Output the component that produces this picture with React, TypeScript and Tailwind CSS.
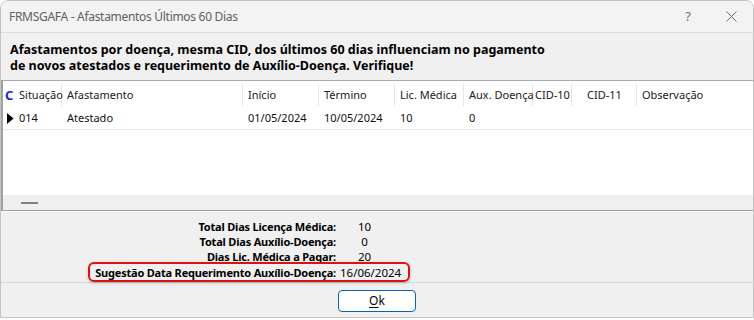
import React from "react";

const cols = [
  { label: "Situação", w: 45, pl: 2, val: "014", center: false, last: false },
  { label: "Afastamento", w: 181, pl: 5, val: "Atestado", center: false, last: false },
  { label: "Início", w: 76, pl: 5, val: "01/05/2024", center: false, last: false },
  { label: "Término", w: 76, pl: 5, val: "10/05/2024", center: false, last: false },
  { label: "Lic. Médica", w: 69, pl: 5, val: "10", center: false, last: false },
  { label: "Aux. Doença", w: 69, pl: 5, val: "0", center: false, last: false },
  { label: "CID-10", w: 39, pl: 0, val: "", center: true, last: false },
  { label: "CID-11", w: 65, pl: 0, val: "", center: true, last: false },
  { label: "Observação", w: 110, pl: 5, val: "", center: false, last: true },
];

export default function App() {
  const font = { fontFamily: '"Noto Sans", "Open Sans", Arial, sans-serif' };
  return (
    <div className="w-[754px] h-[320px] bg-white overflow-hidden" style={font}>
      <div className="w-[754px] h-[318px] border border-[#c4c4c4] rounded-t-[8px] bg-[#f0f0f0] flex flex-col overflow-hidden">
        {/* Title bar */}
        <div className="h-[32px] shrink-0 bg-[#f3f3f3] border-b border-[#dcdcdc] flex items-center pl-[8px] text-[12px] text-[#606060]">
          <span className="flex-1 tracking-[-0.3px]">FRMSGAFA - Afastamentos Últimos 60 Dias</span>
          <span className="w-[14px] text-center text-[13px] text-[#707070] mr-[31px]">?</span>
          <svg width="11" height="11" viewBox="0 0 11 11" className="mr-[16px]">
            <path d="M0.5 0.5 L10.5 10.5 M10.5 0.5 L0.5 10.5" stroke="#6a6a6a" strokeWidth="1" fill="none" />
          </svg>
        </div>
        {/* Header message */}
        <div className="h-[47px] shrink-0 pl-[9px] pt-[9px] font-bold text-[12.5px] leading-[16px] text-black">
          <div>Afastamentos por doença, mesma CID, dos últimos 60 dias influenciam no pagamento</div>
          <div>de novos atestados e requerimento de Auxílio-Doença. Verifique!</div>
        </div>
        {/* Grid */}
        <div className="h-[131px] shrink-0 flex flex-col border-t border-[#a8a8a8] border-l-2 border-l-[#a0a0a0] border-b border-b-[#a0a0a0]">
          <div className="h-[114px] bg-white flex flex-col">
            <div className="h-[25px] flex items-center text-[11px] text-[#202020] pt-[3px]">
              <div className="w-[14px] pl-[2px] text-[#1a1aff] font-bold text-[13px] leading-none">C</div>
              {cols.map((c) => (
                <div
                  key={c.label}
                  className={`relative h-[22px] flex items-center whitespace-nowrap ${c.center ? "justify-center" : ""}`}
                  style={{ width: c.w, paddingLeft: c.pl }}
                >
                  <span className="relative z-10">{c.label}</span>
                  {!c.last && <div className="absolute right-0 top-0 h-[22px] w-px bg-[#e6e6e6]" />}
                </div>
              ))}
            </div>
            <div className="h-[24px] flex items-center text-[11px] text-[#101010] border-b border-[#e8e8e8] pt-[2px]">
              <div className="w-[14px] pl-[4px] flex items-center">
                <svg width="7" height="11" viewBox="0 0 7 11">
                  <path d="M0 0 L6.5 5.5 L0 11 Z" fill="#000" />
                </svg>
              </div>
              {cols.map((c) => (
                <div
                  key={c.label}
                  className={`whitespace-nowrap ${c.center ? "text-center" : ""}`}
                  style={{ width: c.w, paddingLeft: c.pl }}
                >
                  {c.val}
                </div>
              ))}
            </div>
          </div>
          <div className="flex-1 bg-[#efefef] flex items-center pl-[18px]">
            <div className="w-[17px] h-[2px] bg-[#808080]" />
          </div>
        </div>
        <div className="h-px shrink-0 bg-white" />
        {/* Summary */}
        <div className="h-[71px] shrink-0 border-b border-[#d8d8d8] flex flex-col pt-[7px] text-[11.5px] leading-[15px] text-black">
          {[
            ["Total Dias Licença Médica:", "10"],
            ["Total Dias Auxílio-Doença:", "0"],
            ["Dias Lic. Médica a Pagar:", "20"],
          ].map(([l, v]) => (
            <div key={l} className="flex">
              <div className="w-[335px] text-right font-bold text-[11px] tracking-[-0.2px] whitespace-nowrap">{l}</div>
              <div className="w-[58px] text-center pr-[1px]">{v}</div>
            </div>
          ))}
          <div className="flex">
            <div className="ml-[87px] h-[20px] w-[322px] -mt-[2px] border-2 border-[#e01010] rounded-[6px] shadow-[0_1px_3px_rgba(0,0,0,0.25)] flex items-center">
              <div className="w-[246px] text-right font-bold text-[11px] tracking-[-0.2px] whitespace-nowrap">Sugestão Data Requerimento Auxílio-Doença:</div>
              <div className="pl-[4px] whitespace-nowrap">16/06/2024</div>
            </div>
          </div>
        </div>
        {/* Button row */}
        <div className="flex-1 flex justify-center pt-[7px]">
          <div className="w-[78px] h-[22px] bg-white border border-[#0067c0] rounded-[4px] flex items-center justify-center text-[12px] text-black">
            <span className="underline underline-offset-2">O</span>k
          </div>
        </div>
      </div>
    </div>
  );
}
